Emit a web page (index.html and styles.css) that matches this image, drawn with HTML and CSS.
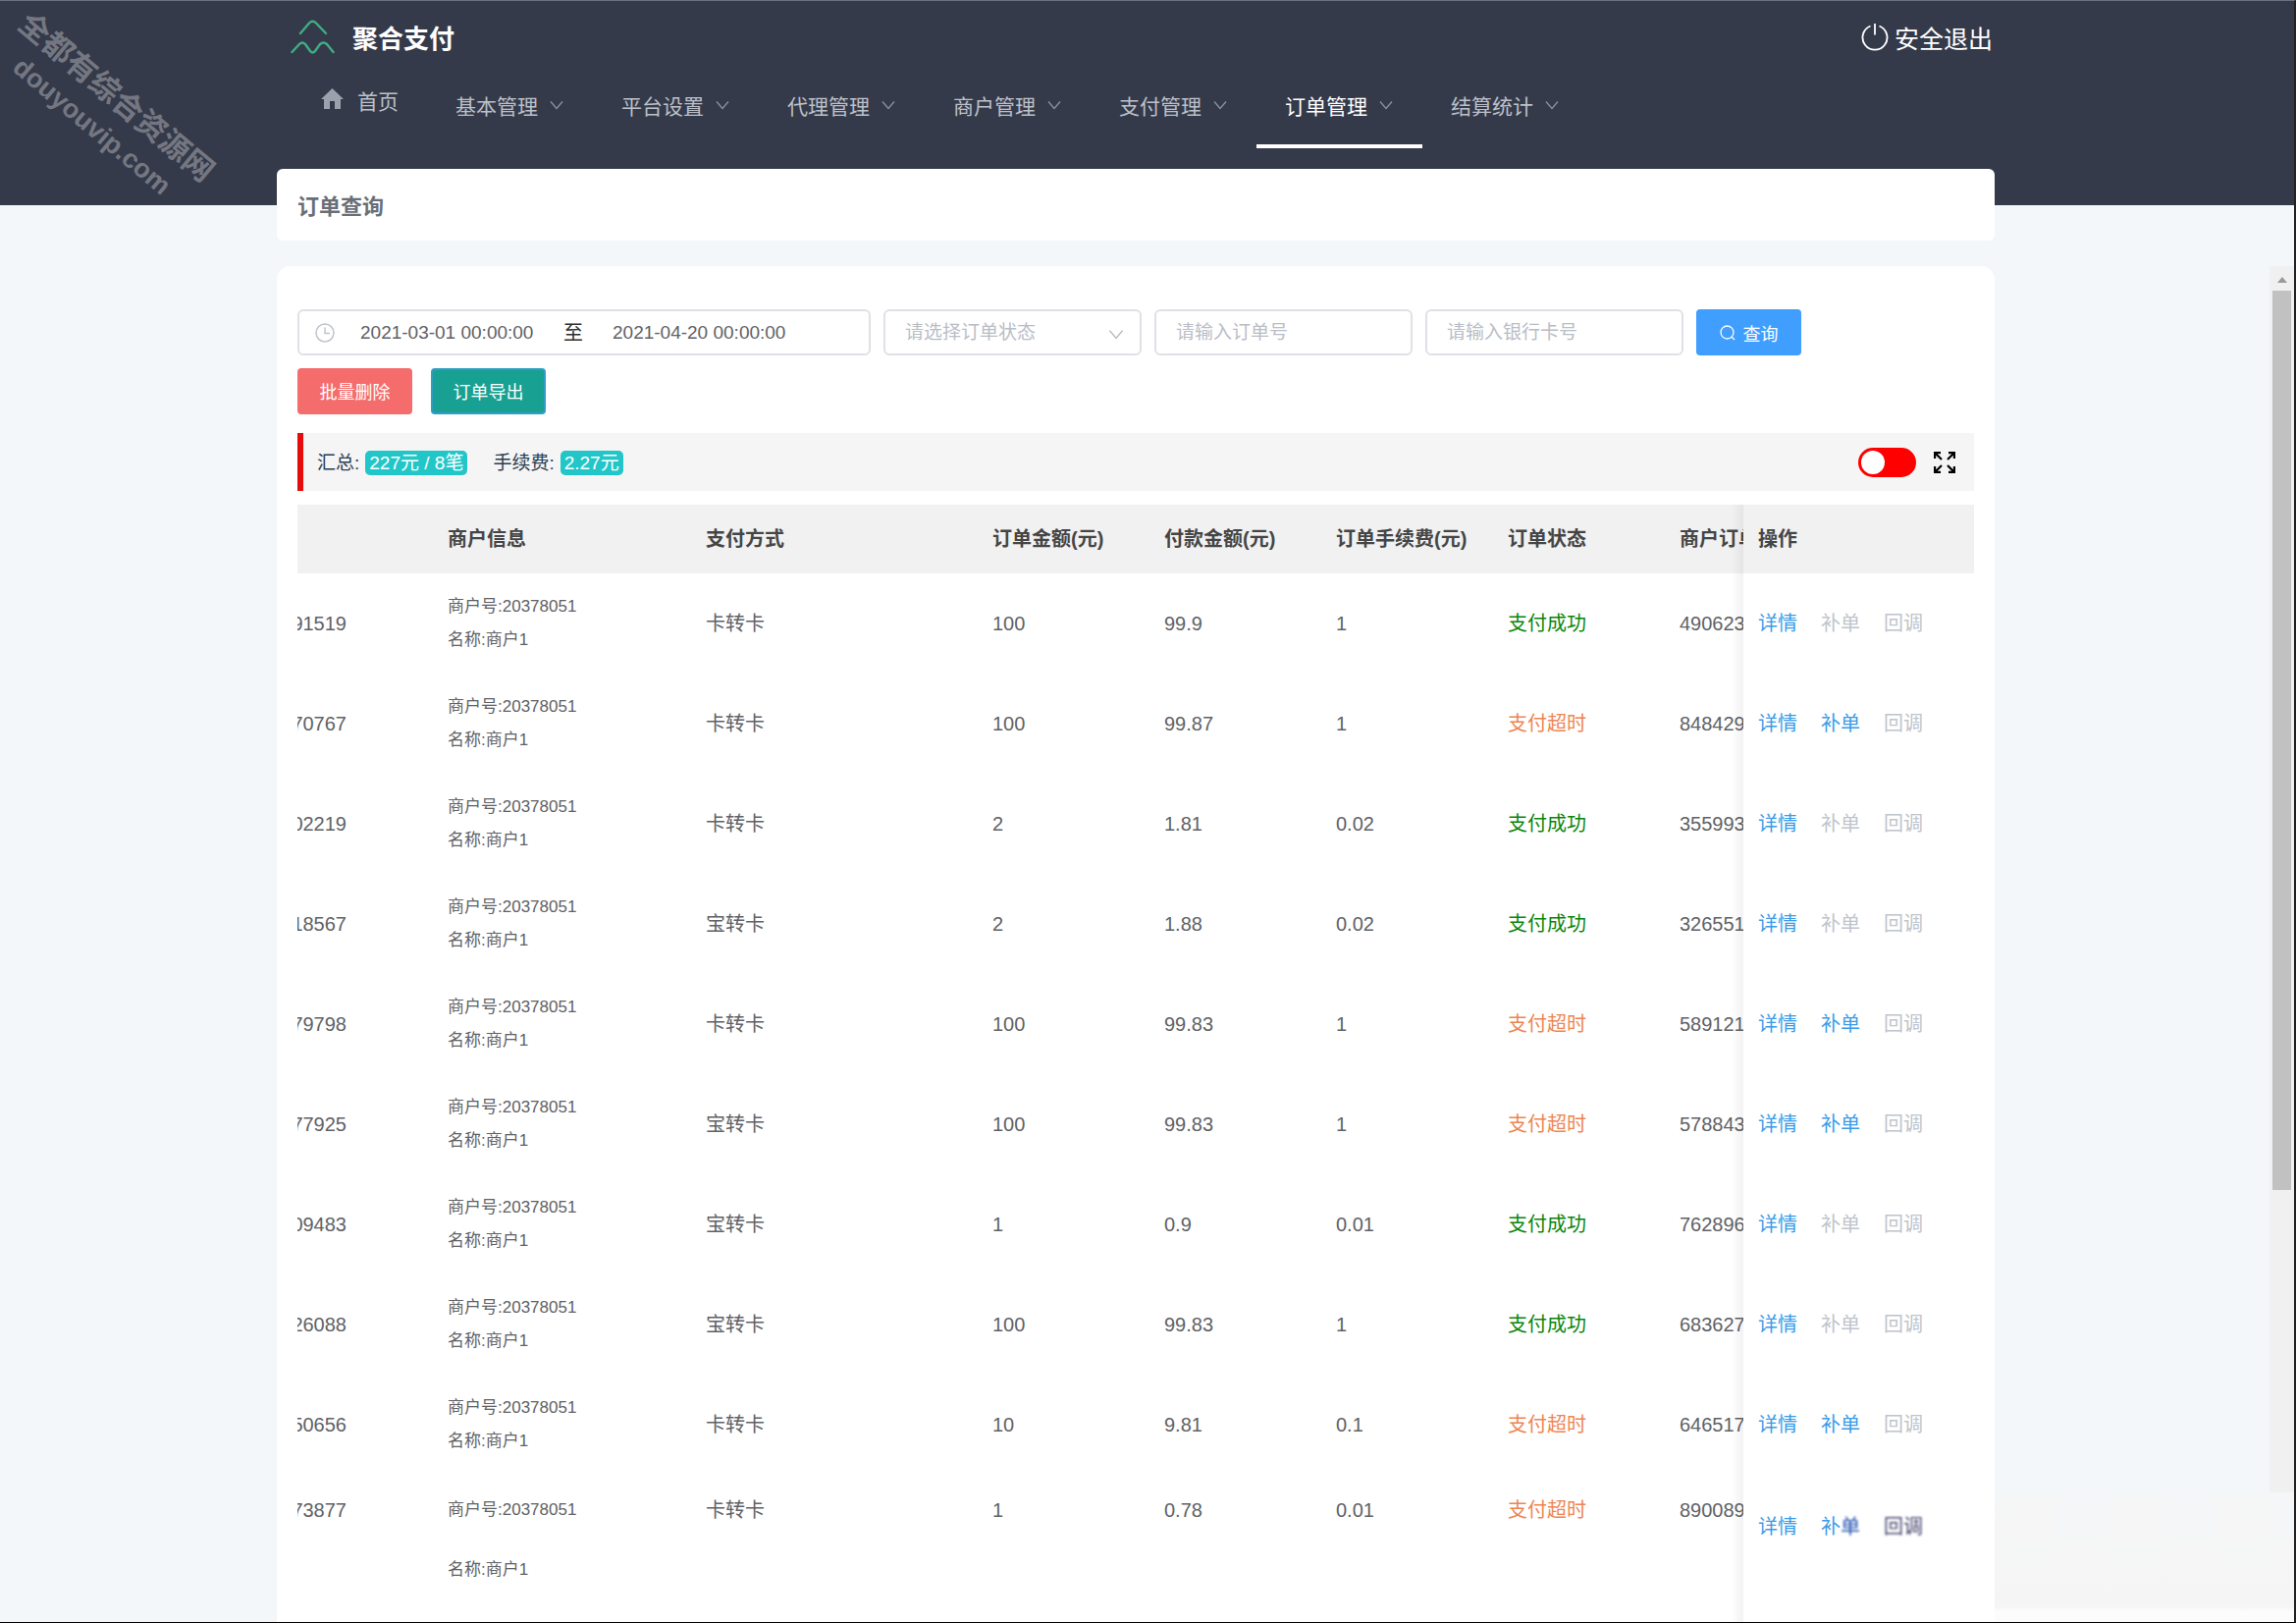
FILE: index.html
```html
<!DOCTYPE html>
<html lang="zh-CN">
<head>
<meta charset="utf-8">
<meta name="viewport" content="width=device-width, initial-scale=1">
<title>聚合支付 - 订单查询</title>
<link rel="stylesheet" href="styles.css">
</head>
<body>
<svg class="defs" aria-hidden="true">
  <symbol id="chev" viewBox="0 0 14 10"><path d="M1 1.5 7 8.5 13 1.5" fill="none" stroke="currentColor" stroke-width="1.3"/></symbol>
</svg>
<div class="page">
  <header class="header">
    <div class="brand-row">
      <a class="brand" href="#">
        <svg class="brand-logo" viewBox="0 0 45 35" aria-hidden="true"><g fill="none" stroke="#3fae84" stroke-width="2.4" stroke-linecap="round" stroke-linejoin="round"><path d="M10 14 19 3.5Q22.500 0 26 3.500L36 14"/><path d="M1.500 33 9 25Q12 22 15 25L20 32Q22.500 35 25 32L30 25Q33.500 22 37 25L43.500 33"/></g></svg>
        <span>聚合支付</span>
      </a>
      <button class="logout" type="button">
        <svg class="logout-icon" viewBox="0 0 28 28" aria-hidden="true"><path d="M9.500 2.500A12.500 12.500 0 1 0 18.500 2.500M14 0V11.500" fill="none" stroke="#fff" stroke-width="1.8"/></svg>
        <span>安全退出</span>
      </button>
    </div>
    <nav class="nav">
      <a class="nav-item nav-home" href="#"><svg class="home-icon" viewBox="0 0 23 21" aria-hidden="true"><path d="M11.500 0 23 11H20V21H14V13H9V21H3V11H0Z" fill="#9ca1ae"/></svg><span>首页</span></a>
      <a class="nav-item" href="#"><span>基本管理</span><svg class="nav-chev"><use href="#chev"/></svg></a>
      <a class="nav-item" href="#"><span>平台设置</span><svg class="nav-chev"><use href="#chev"/></svg></a>
      <a class="nav-item" href="#"><span>代理管理</span><svg class="nav-chev"><use href="#chev"/></svg></a>
      <a class="nav-item" href="#"><span>商户管理</span><svg class="nav-chev"><use href="#chev"/></svg></a>
      <a class="nav-item" href="#"><span>支付管理</span><svg class="nav-chev"><use href="#chev"/></svg></a>
      <a class="nav-item active" href="#"><span>订单管理</span><svg class="nav-chev"><use href="#chev"/></svg></a>
      <a class="nav-item" href="#"><span>结算统计</span><svg class="nav-chev"><use href="#chev"/></svg></a>
    </nav>
  </header>

  <main class="content">
    <section class="title-card"><h1>订单查询</h1></section>
    <section class="card">
      <form class="filters">
        <div class="date-range">
          <svg class="clock" viewBox="0 0 20 20" aria-hidden="true"><g fill="none" stroke="#c0c4cc" stroke-width="1.500"><circle cx="10" cy="10" r="9"/><path d="M10 4.500V10.500H15"/></g></svg>
          <input class="date" type="text" value="2021-03-01 00:00:00" aria-label="开始时间">
          <span class="to">至</span>
          <input class="date" type="text" value="2021-04-20 00:00:00" aria-label="结束时间">
        </div>
        <div class="select-wrap">
          <select class="field" aria-label="订单状态"><option>请选择订单状态</option></select>
          <svg class="select-chev"><use href="#chev"/></svg>
        </div>
        <input class="field" type="text" placeholder="请输入订单号" aria-label="订单号">
        <input class="field" type="text" placeholder="请输入银行卡号" aria-label="银行卡号">
        <button class="btn btn-search" type="button"><svg class="search-icon" viewBox="0 0 16 16" aria-hidden="true"><g fill="none" stroke="#fff" stroke-width="1.300"><circle cx="7.500" cy="7.500" r="6.500"/><path d="M12 12 15 15"/></g></svg><span>查询</span></button>
      </form>
      <div class="bulk">
        <button class="btn btn-delete" type="button">批量删除</button>
        <button class="btn btn-export" type="button">订单导出</button>
      </div>
      <div class="summary">
        <span class="sum-item">汇总: <b>227元 / 8笔</b></span>
        <span class="sum-item">手续费: <b>2.27元</b></span>
        <input class="switch" type="checkbox" role="switch" aria-label="自动刷新">
        <button class="expand" type="button" aria-label="全屏"><svg viewBox="0 0 22 22" aria-hidden="true"><g fill="none" stroke="#000" stroke-width="2.200"><path d="M1.100 7V1.100H7M1.500 1.500 8 8M15 1.100H20.900V7M20.500 1.500 14 8M1.100 15V20.900H7M1.500 20.500 8 14M15 20.900H20.900V15M20.500 20.500 14 14"/></g></svg></button>
      </div>
      <table class="orders">
        <colgroup><col class="c-id"><col class="c-merchant"><col><col class="c-num"><col class="c-num"><col class="c-num"><col class="c-num"><col class="c-no"><col class="c-ops"></colgroup>
        <thead><tr><th></th><th>商户信息</th><th>支付方式</th><th>订单金额(元)</th><th>付款金额(元)</th><th>订单手续费(元)</th><th>订单状态</th><th class="cut">商户订单</th><th class="ops">操作</th></tr></thead>
        <tbody>
          <tr><td class="id"><div>91519</div></td><td class="merchant"><p>商户号:20378051</p><p>名称:商户1</p></td><td>卡转卡</td><td>100</td><td>99.9</td><td>1</td><td class="ok">支付成功</td><td class="cut">490623</td><td class="ops"><button type="button">详情</button><button type="button" disabled>补单</button><button type="button" disabled>回调</button></td></tr>
          <tr><td class="id"><div>70767</div></td><td class="merchant"><p>商户号:20378051</p><p>名称:商户1</p></td><td>卡转卡</td><td>100</td><td>99.87</td><td>1</td><td class="late">支付超时</td><td class="cut">848429</td><td class="ops"><button type="button">详情</button><button type="button">补单</button><button type="button" disabled>回调</button></td></tr>
          <tr><td class="id"><div>02219</div></td><td class="merchant"><p>商户号:20378051</p><p>名称:商户1</p></td><td>卡转卡</td><td>2</td><td>1.81</td><td>0.02</td><td class="ok">支付成功</td><td class="cut">355993</td><td class="ops"><button type="button">详情</button><button type="button" disabled>补单</button><button type="button" disabled>回调</button></td></tr>
          <tr><td class="id"><div>18567</div></td><td class="merchant"><p>商户号:20378051</p><p>名称:商户1</p></td><td>宝转卡</td><td>2</td><td>1.88</td><td>0.02</td><td class="ok">支付成功</td><td class="cut">326551</td><td class="ops"><button type="button">详情</button><button type="button" disabled>补单</button><button type="button" disabled>回调</button></td></tr>
          <tr><td class="id"><div>79798</div></td><td class="merchant"><p>商户号:20378051</p><p>名称:商户1</p></td><td>卡转卡</td><td>100</td><td>99.83</td><td>1</td><td class="late">支付超时</td><td class="cut">589121</td><td class="ops"><button type="button">详情</button><button type="button">补单</button><button type="button" disabled>回调</button></td></tr>
          <tr><td class="id"><div>77925</div></td><td class="merchant"><p>商户号:20378051</p><p>名称:商户1</p></td><td>宝转卡</td><td>100</td><td>99.83</td><td>1</td><td class="late">支付超时</td><td class="cut">578843</td><td class="ops"><button type="button">详情</button><button type="button">补单</button><button type="button" disabled>回调</button></td></tr>
          <tr><td class="id"><div>09483</div></td><td class="merchant"><p>商户号:20378051</p><p>名称:商户1</p></td><td>宝转卡</td><td>1</td><td>0.9</td><td>0.01</td><td class="ok">支付成功</td><td class="cut">762896</td><td class="ops"><button type="button">详情</button><button type="button" disabled>补单</button><button type="button" disabled>回调</button></td></tr>
          <tr><td class="id"><div>26088</div></td><td class="merchant"><p>商户号:20378051</p><p>名称:商户1</p></td><td>宝转卡</td><td>100</td><td>99.83</td><td>1</td><td class="ok">支付成功</td><td class="cut">683627</td><td class="ops"><button type="button">详情</button><button type="button" disabled>补单</button><button type="button" disabled>回调</button></td></tr>
          <tr><td class="id"><div>50656</div></td><td class="merchant"><p>商户号:20378051</p><p>名称:商户1</p></td><td>卡转卡</td><td>10</td><td>9.81</td><td>0.1</td><td class="late">支付超时</td><td class="cut">646517</td><td class="ops"><button type="button">详情</button><button type="button">补单</button><button type="button" disabled>回调</button></td></tr>
          <tr class="tall"><td class="id"><div>73877</div></td><td class="merchant"><p>商户号:20378051</p><p>名称:商户1</p></td><td>卡转卡</td><td>1</td><td>0.78</td><td>0.01</td><td class="late">支付超时</td><td class="cut">890089</td><td class="ops"><button type="button">详情</button><button type="button">补<span class="smudge smudge-blue">单</span></button><button type="button" disabled><span class="smudge">回调</span></button></td></tr>
        </tbody>
      </table>
    </section>
  </main>

  <div class="corner" aria-hidden="true"></div>
  <div class="scrollbar" aria-hidden="true"><i class="arrow"></i><i class="thumb"></i></div>
  <div class="watermark"><div class="wm-name">全都有综合资源网</div><div class="wm-url">douyouvip.com</div></div>
</div>
</body>
</html>
```
FILE: styles.css
```css
* { box-sizing: border-box; }
body {
  margin: 0;
  font-family: "Liberation Sans", "Noto Sans CJK SC", sans-serif;
  font-size: 20px;
  color: #606266;
  background: #f3f7fa;
}
button, input, select { font-family: inherit; margin: 0; }
button { border: 0; padding: 0; background: none; cursor: pointer; }
a { text-decoration: none; color: inherit; }
h1, p { margin: 0; }
.defs { position: absolute; width: 0; height: 0; }

.page {
  position: relative;
  display: flex;
  flex-direction: column;
  height: 100vh;
  overflow: hidden;
  border-top: 1px solid #6b7080;
  border-right: 2px solid #222;
  border-bottom: 1px solid #000;
}

/* header */
.header {
  flex: none;
  padding: 0 304px 58px 282px;
  background: #353a4a;
}
.brand-row {
  display: flex;
  align-items: center;
  justify-content: space-between;
  height: 76px;
  padding: 0 3px 3px 14px;
}
.brand { display: flex; align-items: center; gap: 18px; color: #fff; font-size: 26px; font-weight: 700; }
.brand-logo { width: 45px; height: 35px; }
.logout { display: flex; align-items: center; gap: 6px; color: #fff; font-size: 25px; }
.logout-icon { width: 28px; height: 28px; }
.nav { display: flex; height: 74px; }
.nav-item {
  display: flex;
  align-items: flex-start;
  gap: 12px;
  padding: 16px 30px 0 29px;
  border-bottom: 4px solid transparent;
  color: #bcc0c9;
  font-size: 21px;
  line-height: 31px;
  white-space: nowrap;
}
.nav-chev { width: 14px; height: 10px; margin-top: 9px; color: #8d919d; }
.nav-home { gap: 14px; padding: 11px 29px 0 45px; }
.home-icon { width: 23px; height: 21px; margin-top: 2px; }
.nav-item.active { color: #fff; border-bottom-color: #fff; }

/* cards */
.content {
  flex: 1;
  min-height: 0;
  display: flex;
  flex-direction: column;
  gap: 26px;
  margin: -37px 305px 0 282px;
}
.title-card {
  flex: none;
  padding: 23px 21px 19px;
  border-radius: 6px;
  background: #fff;
}
.title-card h1 { font-size: 22px; line-height: 31px; font-weight: 700; color: #6a6f77; }
.card {
  flex: 1;
  min-height: 0;
  overflow: hidden;
  padding: 44px 21px 0;
  border-radius: 14px 14px 0 0;
  background: #fff;
}

/* filters */
.filters { display: flex; gap: 13px; }
.date-range, .field {
  height: 47px;
  border: 2px solid #dfe1e6;
  border-radius: 6px;
  background: #fff;
}
.date-range { display: flex; align-items: center; width: 584px; padding-left: 16px; }
.clock { width: 20px; height: 20px; margin-right: 26px; }
.date { width: 180px; border: 0; padding: 0; background: none; color: #606266; font-size: 19px; }
.to { margin: 0 30px 0 27px; font-size: 20px; line-height: 30px; color: #303133; }
.select-wrap { position: relative; }
.field { width: 263px; padding: 0 20px; font-size: 19px; color: #606266; }
select.field { appearance: none; color: #b9bdc6; }
.field::placeholder { color: #b9bdc6; opacity: 1; }
.select-chev { position: absolute; right: 18px; top: 20px; width: 16px; height: 11px; color: #b4b8c0; }

.btn { height: 47px; border-radius: 4px; color: #fff; font-size: 18px; }
.btn-search { display: flex; align-items: center; justify-content: center; gap: 8px; width: 107px; background: #409eff; }
.search-icon { width: 16px; height: 16px; }
.bulk { display: flex; gap: 19px; margin-top: 13px; }
.bulk .btn { padding-bottom: 2px; }
.btn-delete { width: 117px; background: #f56c6c; }
.btn-export { width: 117px; background: #18a193; border: 2px solid #2f9dc4; }

/* summary */
.summary {
  display: flex;
  align-items: center;
  gap: 26px;
  height: 59px;
  margin: 19px 0 14px;
  padding: 0 19px 0 14px;
  border-left: 6px solid #e60c0c;
  background: #f5f5f5;
  font-size: 19px;
  color: #2c3e50;
}
.sum-item { display: flex; align-items: center; gap: 6px; padding-top: 2px; line-height: 25px; white-space: nowrap; }
.sum-item b { padding: 0 4px; border-radius: 5px; background: #23c6c8; color: #fff; font-weight: 400; }
.switch {
  appearance: none;
  width: 59px;
  height: 30px;
  margin-left: auto;
  padding: 3px;
  border-radius: 15px;
  background: #f00;
}
.switch::before { content: ""; display: block; width: 24px; height: 24px; border-radius: 50%; background: #fff; }
.expand { width: 22px; height: 22px; margin-left: -8px; }
.expand svg { display: block; width: 22px; height: 22px; }

/* orders table */
.orders { width: 100%; table-layout: fixed; border-collapse: collapse; line-height: 34px; }
.c-id { width: 138px; }
.c-merchant { width: 263px; }
.c-num { width: 175px; }
.c-no { width: 80px; }
.c-ops { width: 235px; }
.orders th {
  height: 70px;
  padding: 0 0 1px 15px;
  text-align: left;
  font-weight: 700;
  color: #454545;
  background: #f1f1f1;
  white-space: nowrap;
}
.orders td { padding: 17px 0 17px 15px; background: #fff; white-space: nowrap; }
.orders .id { padding-left: 0; padding-right: 88px; overflow: hidden; }
.id div { display: flex; justify-content: flex-end; overflow: hidden; }
.merchant { font-size: 17px; }
.orders .cut { overflow: hidden; }
.orders .ok { color: #0a860a; }
.orders .late { color: #ee8552; }
.orders .ops { position: relative; }
.orders .ops::before {
  content: "";
  position: absolute;
  top: 0;
  bottom: 0;
  left: -12px;
  width: 12px;
  background: linear-gradient(to right, rgba(0, 0, 0, 0), rgba(0, 0, 0, .05));
}
.ops button { margin-right: 24px; color: #3a9be8; font-size: 20px; line-height: 34px; }
.ops button:disabled { color: #c0c4cc; }
.tall td { height: 150px; vertical-align: top; }
.orders .tall td { padding-top: 19px; }
.tall .merchant p + p { margin-top: 27px; }
.orders .tall .ops { padding-top: 36px; }
.smudge { color: #44466e; filter: blur(1px); }
.smudge-blue { color: #1f4fae; }

/* window overlays */
.corner {
  position: absolute;
  right: 0;
  bottom: 0;
  width: 305px;
  height: 132px;
  background: linear-gradient(#f5f6f7, #f5f5f5 88%, #fcfcfc 92%);
}
.scrollbar {
  position: absolute;
  top: 270px;
  right: 0;
  bottom: 132px;
  width: 25px;
  padding: 11px 3px 0;
  background: #f0f0f0;
}
.arrow { display: block; width: 0; margin: 0 auto 8px; border: 5px solid transparent; border-top: 0; border-bottom: 6px solid #9a9a9a; }
.thumb { display: block; height: 74%; background: #c1c1c1; }
.watermark {
  position: absolute;
  left: -22px;
  top: 75px;
  width: 256px;
  transform: rotate(40deg);
  color: rgba(255, 255, 255, .33);
  font-weight: 700;
  line-height: 38px;
  text-align: center;
  white-space: nowrap;
  pointer-events: none;
}
.wm-name { font-size: 31px; }
.wm-url { font-size: 27px; }
```
